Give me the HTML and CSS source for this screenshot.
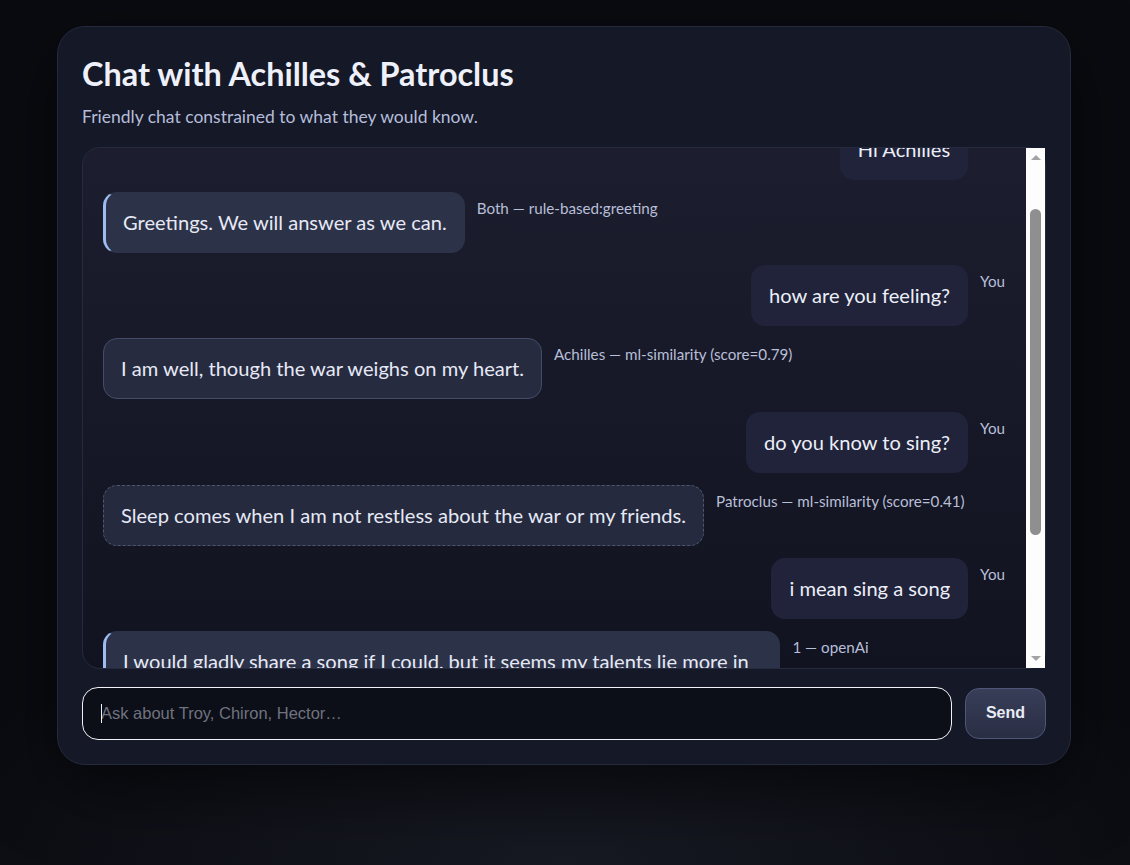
FILE: index.html
```html
<!DOCTYPE html>
<html lang="en">
<head>
<meta charset="utf-8">
<title>Chat with Achilles &amp; Patroclus</title>
<link rel="stylesheet" href="styles.css">
</head>
<body>
<main class="card">
  <h1 class="title">Chat with Achilles &amp; Patroclus</h1>
  <p class="subtitle">Friendly chat constrained to what they would know.</p>
  <div class="chat">
    <div class="chat-scroll" id="chat">
      <div class="row user">
        <div class="bubble">Hi Achilles</div>
        <div class="meta">You</div>
      </div>
      <div class="row bot">
        <div class="bubble accent">Greetings. We will answer as we can.</div>
        <div class="meta">Both — rule-based:greeting</div>
      </div>
      <div class="row user">
        <div class="bubble">how are you feeling?</div>
        <div class="meta">You</div>
      </div>
      <div class="row bot">
        <div class="bubble solid">I am well, though the war weighs on my heart.</div>
        <div class="meta">Achilles — ml-similarity (score=0.79)</div>
      </div>
      <div class="row user">
        <div class="bubble">do you know to sing?</div>
        <div class="meta">You</div>
      </div>
      <div class="row bot">
        <div class="bubble dashed">Sleep comes when I am not restless about the war or my friends.</div>
        <div class="meta">Patroclus — ml-similarity (score=0.41)</div>
      </div>
      <div class="row user">
        <div class="bubble">i mean sing a song</div>
        <div class="meta">You</div>
      </div>
      <div class="row bot">
        <div class="bubble accent">I would gladly share a song if I could, but it seems my talents lie more in the ways of battle than in the art of music. Still, I have heard the bards sing of heroes and their glory around the fires of our camp, and Patroclus hums the old tunes of Phthia when the night is quiet. Perhaps one day, when the war is over, we will sing together of home.</div>
        <div class="meta">1 — openAi</div>
      </div>
    </div>
    <div class="scrollbar" aria-hidden="true">
      <span class="sb-btn"><span class="arrow up"></span></span>
      <div class="sb-track"><div class="sb-thumb"></div></div>
      <span class="sb-btn"><span class="arrow down"></span></span>
    </div>
  </div>
  <form class="composer" onsubmit="return false">
    <label class="field">
      <input class="input" type="text" placeholder="Ask about Troy, Chiron, Hector…">
      <span class="caret"></span>
    </label>
    <button class="send" type="submit">Send</button>
  </form>
</main>
<script src="script.js"></script>
</body>
</html>
```
FILE: styles.css
```css
* { box-sizing: border-box; }

html, body { height: 100%; }

body {
  margin: 0;
  padding-top: 26px;
  background:
    radial-gradient(ellipse 60% 30% at 50% 100%, #171923 0%, rgba(11,12,17,0) 100%),
    #0a0b10;
  font-family: Lato, "Noto Sans", sans-serif;
  color: #e6e9f5;
}

.card {
  width: 1014px;
  margin: 0 0 0 57px;
  padding: 24px;
  background: #151826;
  border: 1px solid #252a3d;
  border-radius: 28px;
  box-shadow: 0 24px 70px rgba(0, 0, 0, 0.55);
}

.title {
  margin: 4px 0 0;
  font-size: 32.4px;
  line-height: 1.2;
  font-weight: 700;
  color: #eef1fb;
}

.subtitle {
  margin: 10px 0 0;
  font-size: 17.5px;
  line-height: 26px;
  color: #b5bddb;
}

.chat {
  margin-top: 17px;
  height: 522px;
  display: flex;
  border: 1px solid #262a3f;
  border-radius: 18px;
  background: linear-gradient(180deg, #1c1e2f 0%, #111320 100%);
}

.chat-scroll {
  flex: 1;
  min-width: 0;
  overflow: hidden;
  padding: 20px 21px 20px 20px;
  display: flex;
  flex-direction: column;
  gap: 12.2px;
  border-radius: 17px 0 0 17px;
}

/* classic light scrollbar */
.scrollbar {
  width: 19px;
  flex-shrink: 0;
  display: flex;
  flex-direction: column;
  background: #fdfdfd;
}

.sb-btn {
  height: 16px;
  display: flex;
  align-items: center;
  justify-content: center;
}

.arrow {
  width: 0;
  height: 0;
  border-left: 5px solid transparent;
  border-right: 5px solid transparent;
}

.arrow.up { border-bottom: 5px solid #a3a3a3; margin-top: 4px; }
.arrow.down { border-top: 5px solid #a3a3a3; margin-bottom: 2px; }

.sb-track {
  flex: 1;
  display: flex;
  flex-direction: column;
  align-items: center;
}

.sb-thumb {
  margin-top: 45px;
  width: 11px;
  height: 326px;
  border-radius: 6px;
  background: #8f8f8f;
}

.row {
  display: flex;
  align-items: flex-start;
  gap: 12px;
  flex-shrink: 0;
}

.row.user { justify-content: flex-end; }

.bubble {
  max-width: 75.1%;
  padding: 14px 17px;
  font-size: 20.1px;
  line-height: 31px;
  border: 1px solid transparent;
  border-radius: 14px;
  color: #e6e9f5;
}

.user .bubble {
  background: #20233a;
  color: #eceff8;
}

.bot .bubble { background: #272c41; }

.bubble.accent {
  background: #2c3248;
  border-left: 3px solid #9dbcf2;
}

.bubble.solid {
  background: #262b40;
  border-color: #454c68;
}

.bubble.dashed {
  background: #252a3e;
  border: 1px dashed #4f566f;
}

.meta {
  margin-top: 6px;
  font-size: 15.2px;
  line-height: 20px;
  color: #b8bfd8;
  white-space: nowrap;
}

.composer {
  margin: 18px 0 0;
  display: flex;
  align-items: stretch;
  gap: 13px;
}

.field {
  position: relative;
  flex: 1;
  display: flex;
}

.input {
  flex: 1;
  height: 53px;
  padding: 0 18px;
  background: #0c0e18;
  border: 1px solid #f2f2f6;
  border-radius: 16px;
  outline: none;
  color: #e6e9f5;
  font-family: "Liberation Sans", Arial, sans-serif;
  font-size: 16.5px;
}

.input::placeholder { color: #70737f; }

.caret {
  position: absolute;
  left: 19px;
  top: 17px;
  width: 1px;
  height: 19px;
  background: #f2f2f6;
}

.send {
  margin: 1px 0;
  padding: 0 20px;
  background: linear-gradient(180deg, #383e58 0%, #292e44 100%);
  border: 1px solid #4f5778;
  border-radius: 14px;
  color: #e9ecf6;
  font-family: "Liberation Sans", Arial, sans-serif;
  font-size: 16px;
  font-weight: 600;
  cursor: pointer;
}
```
FILE: script.js
```js
var chat = document.getElementById('chat');
chat.scrollTop = 49;
```
